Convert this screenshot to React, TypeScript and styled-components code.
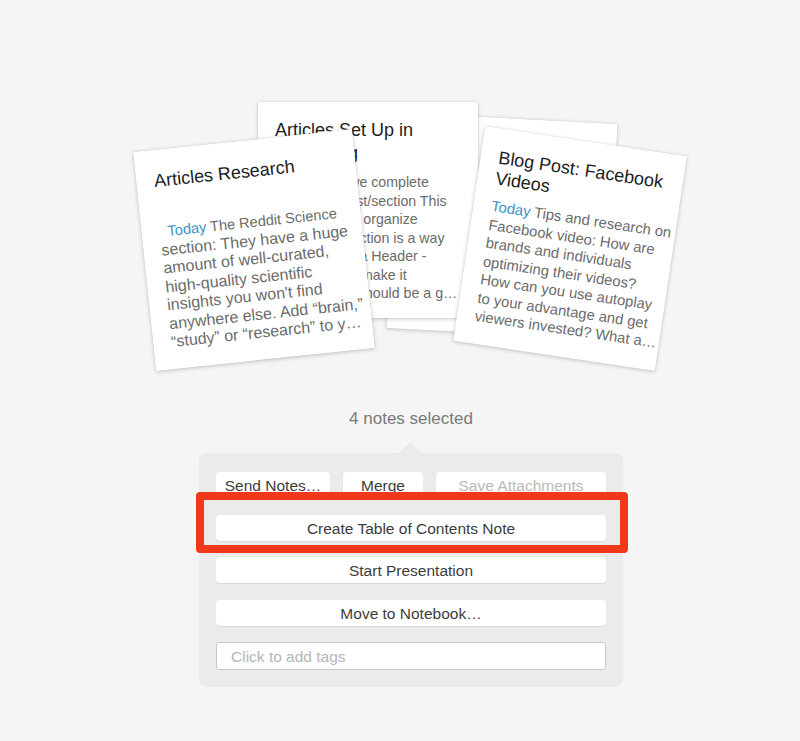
import React from "react";
import styled, { createGlobalStyle } from "styled-components";

const Global = createGlobalStyle`
  html, body { margin: 0; padding: 0; background: #f5f5f5; }
  body { font-family: "Liberation Sans", Arial, Helvetica, sans-serif; }
`;

const Page = styled.div`
  width: 800px;
  height: 741px;
  overflow: hidden;
  display: flex;
  flex-direction: column;
  background: #f5f5f5;
`;

const Stage = styled.div`
  position: relative;
  width: 800px;
  height: 408px;
  flex: none;
`;

const Card = styled.div<{
  $x: number;
  $y: number;
  $w: number;
  $h: number;
  $rot: number;
  $z: number;
  $pad: string;
}>`
  position: absolute;
  left: ${(p) => p.$x}px;
  top: ${(p) => p.$y}px;
  width: ${(p) => p.$w}px;
  height: ${(p) => p.$h}px;
  transform: rotate(${(p) => p.$rot}deg);
  z-index: ${(p) => p.$z};
  box-sizing: border-box;
  padding: ${(p) => p.$pad};
  background: #ffffff;
  box-shadow: 0 1px 4px rgba(0, 0, 0, 0.2), 0 0 1px rgba(0, 0, 0, 0.18);
  overflow: hidden;
`;

const Title = styled.div<{ $lh: number }>`
  font-size: 18px;
  line-height: ${(p) => p.$lh}px;
  color: #1c1c1c;
  white-space: nowrap;
`;

const Body = styled.div<{ $gap: number; $fs: number }>`
  margin-top: ${(p) => p.$gap}px;
  font-size: ${(p) => p.$fs}px;
  line-height: 18.5px;
  color: #6b6b6b;
`;

const Line = styled.div`
  white-space: nowrap;
`;

const FirstLine = styled.div<{ $fs: number; $indent: number }>`
  white-space: nowrap;
  font-size: ${(p) => p.$fs}px;
  padding-left: ${(p) => p.$indent}px;
`;

const Today = styled.span`
  color: #3b8fca;
`;

const Footer = styled.div`
  display: flex;
  flex-direction: column;
  align-items: center;
  padding-left: 22px;
`;

const Selected = styled.div`
  font-size: 17px;
  line-height: 20px;
  margin-top: 1px;
  color: #7a7a7a;
`;

const Panel = styled.div`
  position: relative;
  margin-top: 24px;
  width: 424px;
  box-sizing: border-box;
  padding: 19px 17px 17px;
  background: #ebebeb;
  border-radius: 8px;
  display: flex;
  flex-direction: column;
  gap: 16.5px;

  &::before {
    content: "";
    position: absolute;
    left: 199px;
    top: -10px;
    border-left: 12px solid transparent;
    border-right: 12px solid transparent;
    border-bottom: 10px solid #ebebeb;
  }
`;

const Row = styled.div`
  display: grid;
  grid-template-columns: 114px 80px 1fr;
  gap: 13px;
`;

const Button = styled.div<{ $disabled?: boolean }>`
  height: 26px;
  box-sizing: border-box;
  padding-top: 2px;
  display: flex;
  align-items: center;
  justify-content: center;
  background: #ffffff;
  border-radius: 4px;
  box-shadow: 0 1px 1px rgba(0, 0, 0, 0.08);
  font-size: 15.5px;
  color: ${(p) => (p.$disabled ? "#b9b9b9" : "#3c3c3c")};
  white-space: nowrap;
`;

const TagInput = styled.div`
  height: 28px;
  box-sizing: border-box;
  display: flex;
  align-items: center;
  padding: 2px 0 0 14px;
  background: #ffffff;
  border: 1px solid #c9c9c9;
  border-radius: 3px;
  font-size: 15.5px;
  color: #b6b6b6;
`;

const Highlight = styled.div`
  position: absolute;
  left: -3px;
  top: 39px;
  width: 432px;
  height: 61px;
  box-sizing: border-box;
  border: 8px solid #f2381b;
  border-radius: 4px;
  pointer-events: none;
`;

type NoteCard = {
  x: number;
  y: number;
  w: number;
  h: number;
  rot: number;
  z: number;
  pad: string;
  titleLh: number;
  bodyGap: number;
  fs: number;
  firstFs: number;
  indent: number;
  title: string[];
  lines: string[];
};

const cards: NoteCard[] = [
  {
    x: 392,
    y: 118,
    w: 220,
    h: 216,
    rot: 3,
    z: 1,
    pad: "17px 18px",
    titleLh: 23,
    bodyGap: 8,
    fs: 14,
    firstFs: 14,
    indent: 0,
    title: [],
    lines: [],
  },
  {
    x: 258,
    y: 102,
    w: 220,
    h: 216,
    rot: 0,
    z: 2,
    pad: "17px 17px",
    titleLh: 23,
    bodyGap: 8,
    fs: 14.2,
    firstFs: 14.2,
    indent: 0,
    title: ["Articles Set Up in", "Publishing"],
    lines: [
      "How we complete",
      "each blog post/section This",
      "and the way I organize",
      "every post section is a way",
      "to break with a Header -",
      "and easier to make it",
      "and headers should be a g…",
    ],
  },
  {
    x: 144,
    y: 140,
    w: 220,
    h: 220,
    rot: -6,
    z: 3,
    pad: "20px 18px 20px 18px",
    titleLh: 22,
    bodyGap: 31,
    fs: 16,
    firstFs: 14.6,
    indent: 8,
    title: ["Articles Research"],
    lines: [
      "The Reddit Science",
      "section: They have a huge",
      "amount of well-curated,",
      "high-quality scientific",
      "insights you won't find",
      "anywhere else. Add “brain,”",
      "“study” or “research” to y…",
    ],
  },
  {
    x: 468,
    y: 140,
    w: 204,
    h: 217,
    rot: 8.5,
    z: 3,
    pad: "19px 18px",
    titleLh: 21,
    bodyGap: 8,
    fs: 14.8,
    firstFs: 14.8,
    indent: 0,
    title: ["Blog Post: Facebook", "Videos"],
    lines: [
      "Tips and research on",
      "Facebook video: How are",
      "brands and individuals",
      "optimizing their videos?",
      "How can you use autoplay",
      "to your advantage and get",
      "viewers invested? What a…",
    ],
  },
];

export default function App() {
  return (
    <Page>
      <Global />
      <Stage>
        {cards.map((c, i) => (
          <Card
            key={i}
            $x={c.x}
            $y={c.y}
            $w={c.w}
            $h={c.h}
            $rot={c.rot}
            $z={c.z}
            $pad={c.pad}
          >
            {c.title.length > 0 && (
              <Title $lh={c.titleLh}>
                {c.title.map((t, j) => (
                  <Line key={j}>{t}</Line>
                ))}
              </Title>
            )}
            {c.lines.length > 0 && (
              <Body $gap={c.bodyGap} $fs={c.fs}>
                {c.lines.map((l, j) =>
                  j === 0 ? (
                    <FirstLine key={j} $fs={c.firstFs} $indent={c.indent}>
                      <Today>Today </Today>
                      {l}
                    </FirstLine>
                  ) : (
                    <Line key={j}>{l}</Line>
                  )
                )}
              </Body>
            )}
          </Card>
        ))}
      </Stage>
      <Footer>
        <Selected>4 notes selected</Selected>
        <Panel>
          <Row>
            <Button>Send Notes…</Button>
            <Button>Merge</Button>
            <Button $disabled>Save Attachments</Button>
          </Row>
          <Button>Create Table of Contents Note</Button>
          <Button>Start Presentation</Button>
          <Button>Move to Notebook…</Button>
          <TagInput>Click to add tags</TagInput>
          <Highlight />
        </Panel>
      </Footer>
    </Page>
  );
}
